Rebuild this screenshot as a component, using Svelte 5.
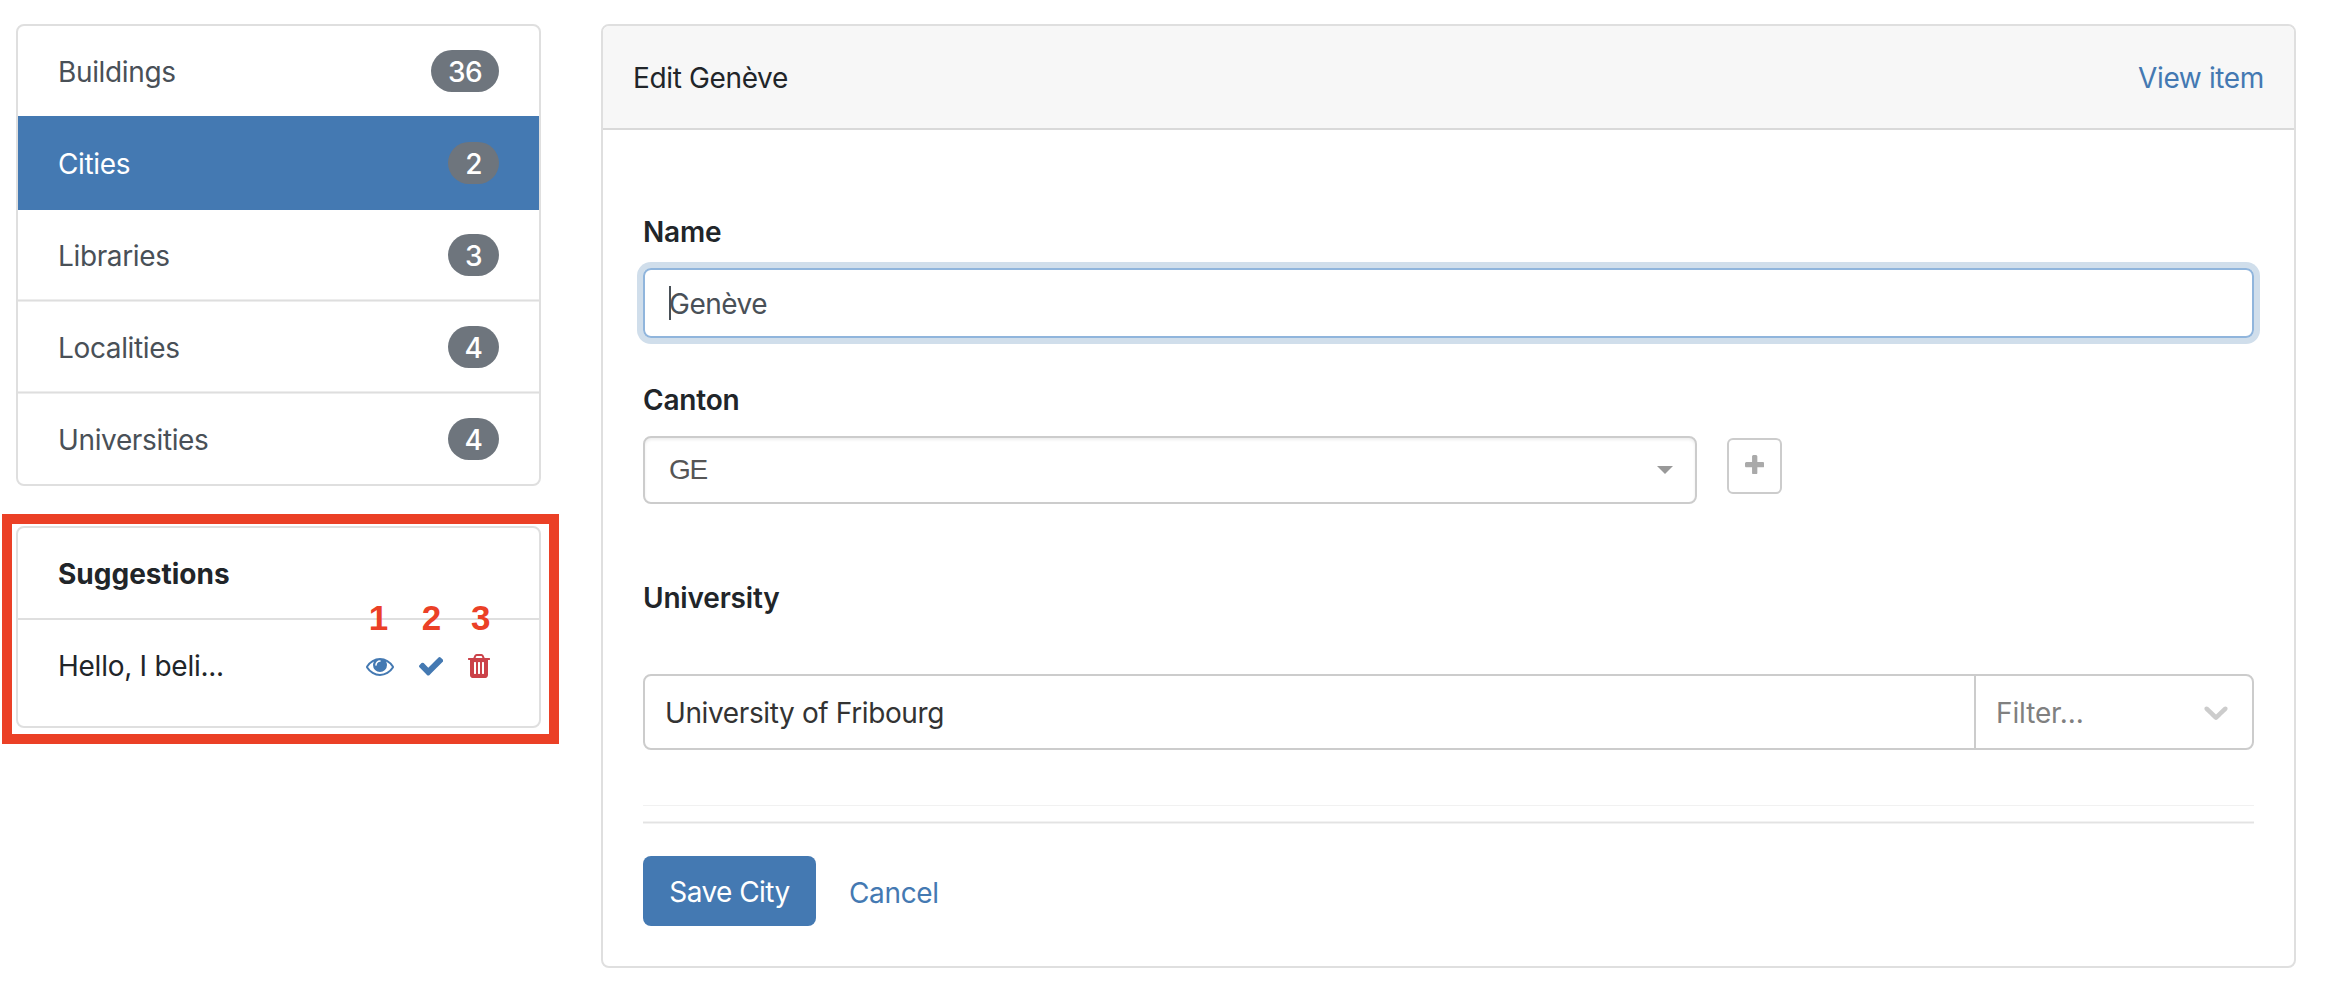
<script>
  const entities = [
    { name: 'Buildings', count: 36 },
    { name: 'Cities', count: 2, active: true },
    { name: 'Libraries', count: 3 },
    { name: 'Localities', count: 4 },
    { name: 'Universities', count: 4 }
  ];
</script>

<div class="page">
  <aside>
    <nav class="card list">
      {#each entities as e}
        <a class="item" class:active={e.active} href="#top">
          <span>{e.name}</span>
          <span class="badge" class:wide={e.count > 9}>{e.count}</span>
        </a>
      {/each}
    </nav>

    <section class="card suggestions">
      <h2>Suggestions</h2>
      <div class="suggestion">
        <span class="excerpt">Hello, I beli...</span>
        <div class="actions">
          <span class="action eye">
            <b class="num">1</b>
            <svg width="28" height="18" viewBox="0 384 1792 1152"><path d="M1664 960q-152-236-381-353 61 104 61 225 0 185-131.500 316.500t-316.500 131.500-316.500-131.500-131.500-316.500q0-121 61-225-229 117-381 353 133 205 333.500 326.500t434.500 121.500 434.500-121.500 333.500-326.500zm-720-384q0-20-14-34t-34-14q-125 0-214.500 89.500t-89.500 214.500q0 20 14 34t34 14 34-14 14-34q0-86 61-147t147-61q20 0 34-14t14-34zm848 384q0 34-20 69-140 230-376.500 368.500t-499.500 138.500-499.500-139-376.500-368q-20-35-20-69t20-69q140-229 376.500-368t499.500-139 499.500 139 376.500 368q20 35 20 69z" /></svg>
          </span>
          <span class="action check">
            <b class="num">2</b>
            <svg width="24.200" height="18.600" viewBox="121 334 1550 1188"><path d="M1671 566q0 40-28 68l-724 724-136 136q-28 28-68 28t-68-28l-136-136-362-362q-28-28-28-68t28-68l136-136q28-28 68-28t68 28l294 295 656-657q28-28 68-28t68 28l136 136q28 28 28 68z" /></svg>
          </span>
          <span class="action trash">
            <b class="num">3</b>
            <svg width="22" height="24" viewBox="192 128 1408 1536"><path d="M704 1376v-704q0-14-9-23t-23-9h-64q-14 0-23 9t-9 23v704q0 14 9 23t23 9h64q14 0 23-9t9-23zm256 0v-704q0-14-9-23t-23-9h-64q-14 0-23 9t-9 23v704q0 14 9 23t23 9h64q14 0 23-9t9-23zm256 0v-704q0-14-9-23t-23-9h-64q-14 0-23 9t-9 23v704q0 14 9 23t23 9h64q14 0 23-9t9-23zm-544-992h448l-48-117q-7-9-17-11h-317q-10 2-17 11zm928 32v64q0 14-9 23t-23 9h-96v948q0 83-47 143.500t-113 60.500h-832q-66 0-113-58.500t-47-141.500v-952h-96q-14 0-23-9t-9-23v-64q0-14 9-23t23-9h309l70-167q15-37 54-63t79-26h320q40 0 79 26t54 63l70 167h309q14 0 23 9t9 23z" /></svg>
          </span>
        </div>
      </div>
      <div class="highlight"></div>
    </section>
  </aside>

  <main class="card">
    <header>
      <span>Edit Genève</span>
      <a class="view" href="#top">View item</a>
    </header>
    <div class="body">
      <div class="label">Name</div>
      <div class="input"><i class="caret"></i>Genève</div>

      <div class="label canton">Canton</div>
      <div class="row">
        <div class="select">
          <span>GE</span>
          <svg width="16" height="8" viewBox="0 0 16 8"><path d="M0 0h16l-8 8z" /></svg>
        </div>
        <button class="add" aria-label="Add canton">
          <svg width="19.400" height="19.400" viewBox="192 128 1408 1408"><path d="M1600 736v192q0 40-28 68t-68 28h-416v416q0 40-28 68t-68 28h-192q-40 0-68-28t-28-68v-416h-416q-40 0-68-28t-28-68v-192q0-40 28-68t68-28h416v-416q0-40 28-68t68-28h192q40 0 68 28t28 68v416h416q40 0 68 28t28 68z" /></svg>
        </button>
      </div>

      <div class="label university">University</div>
      <div class="combo">
        <span class="value">University of Fribourg</span>
        <span class="filter">
          Filter...
          <svg width="40" height="40" viewBox="0 0 20 20"><path d="M4.516 7.548c0.436-0.446 1.043-0.481 1.576 0l3.908 3.747 3.908-3.747c0.533-0.481 1.141-0.446 1.574 0 0.436 0.445 0.408 1.197 0 1.615-0.406 0.418-4.695 4.502-4.695 4.502-0.217 0.223-0.502 0.335-0.787 0.335s-0.570-0.112-0.789-0.335c0 0-4.287-4.084-4.695-4.502s-0.436-1.170 0-1.615z" /></svg>
        </span>
      </div>

      <div class="rule thin"></div>
      <div class="rule"></div>

      <div class="buttons">
        <button class="save">Save City</button>
        <a class="cancel" href="#top">Cancel</a>
      </div>
    </div>
  </main>
</div>

<style>
  :global(body) { background: #fff; }
  .page, .page * { box-sizing: border-box; }
  .page {
    display: flex;
    align-items: flex-start;
    gap: 60px;
    height: 990px;
    padding: 24px 40px 0 16px;
    font: 400 28px/44px Inter, "Liberation Sans", sans-serif;
    letter-spacing: -0.36px;
    color: #212529;
  }
  a { text-decoration: none; color: #4479b2; }
  button { font: inherit; letter-spacing: inherit; padding: 0; }
  svg { display: block; fill: currentColor; flex: none; }
  .card { border: 2px solid #dfdfdf; border-radius: 8px; background: #fff; }

  aside { width: 525px; flex: none; }
  .list { height: 462px; overflow: hidden; }
  .item {
    display: flex;
    align-items: center;
    justify-content: space-between;
    height: 92px;
    padding: 0 40px;
    color: #495057;
  }
  .item:first-child { height: 90px; }
  .item.active { height: 94px; background: #4479b2; color: #fff; }
  .item:nth-child(3) { height: 90px; }
  .item:nth-child(n + 4) {
    padding-top: 2px;
    background: linear-gradient(#dedede 1px, #ededed 1px 2px, transparent 2px);
    box-shadow: 0 -1px #ededed;
  }
  .item span { height: 42px; line-height: 44px; }
  .badge {
    width: 51px;
    border-radius: 21px;
    background: #6e757d;
    color: #fff;
    font-weight: 500;
    letter-spacing: -0.6px;
    text-align: center;
  }
  .badge.wide { width: 68px; }

  .suggestions { position: relative; height: 202px; margin-top: 40px; }
  h2 {
    height: 92px;
    margin: 0;
    padding: 24px 40px 0;
    border-bottom: 2px solid #dfdfdf;
    font-size: 28px;
    line-height: 44px;
    font-weight: 700;
    letter-spacing: 0;
  }
  .suggestion { display: flex; justify-content: space-between; padding: 24px 49px 0 40px; }
  .excerpt { letter-spacing: -0.26px; }
  .actions { display: flex; align-items: flex-start; gap: 25px; color: #4479b2; }
  .action { position: relative; padding-top: 13px; }
  .action.eye { padding-top: 14px; }
  .action.trash { padding-top: 10px; color: #cb4249; }
  .num {
    position: absolute;
    top: -48px;
    left: 3px;
    font: bold 35px/44px "Liberation Sans", Arial, sans-serif;
    letter-spacing: 0;
    color: #eb4026;
  }
  .highlight {
    position: absolute;
    left: -16px;
    top: -14px;
    width: 557px;
    height: 230px;
    border: 10px solid #eb4026;
  }

  main { flex: 1; height: 944px; overflow: hidden; }
  header {
    display: flex;
    justify-content: space-between;
    height: 104px;
    padding: 0 30px;
    border-bottom: 2px solid #d9d9d9;
    background: #f7f7f7;
    line-height: 104px;
  }
  .body { padding: 81px 40px 0; }
  .label { height: 42px; line-height: 42px; font-weight: 600; letter-spacing: -0.18px; }
  .input {
    position: relative;
    height: 70px;
    margin-top: 15px;
    padding-left: 24px;
    border: 2px solid #90b5dc;
    border-radius: 8px;
    box-shadow: 0 0 0 6px #d0deeb;
    line-height: 68px;
    letter-spacing: -0.5px;
    color: #495057;
  }
  .caret { position: absolute; left: 24px; top: 16px; width: 2px; height: 34px; background: #495057; }
  .canton { margin-top: 41px; }
  .row { display: flex; align-items: flex-start; gap: 30px; margin-top: 15px; }
  .select {
    display: flex;
    align-items: center;
    justify-content: space-between;
    width: 1054px;
    height: 68px;
    padding: 0 22px 0 24px;
    border: 2px solid #ccc;
    border-radius: 8px;
    box-shadow: inset 0 2px 3px rgba(0, 0, 0, 0.07);
    font-family: "Liberation Sans", Arial, sans-serif;
    letter-spacing: -1.3px;
    color: #555;
  }
  .select svg { color: #999; }
  .add {
    display: flex;
    justify-content: center;
    width: 55px;
    height: 56px;
    margin-top: 2px;
    padding-top: 15px;
    border: 2px solid #ccc;
    border-radius: 6px;
    background: #fff;
    color: #aaa;
  }
  .university { margin-top: 73px; }
  .combo {
    display: flex;
    height: 76px;
    margin-top: 55px;
    border: 2px solid #ccc;
    border-radius: 8px;
    line-height: 74px;
    color: #333;
  }
  .value { flex: 1; height: 72px; padding-left: 20px; letter-spacing: -0.38px; }
  .filter {
    display: flex;
    justify-content: space-between;
    width: 278px;
    height: 72px;
    padding: 0 16px 0 20px;
    border-left: 2px solid #ccc;
    letter-spacing: -0.12px;
    color: #808080;
  }
  .filter svg { margin-top: 16px; color: #ccc; }
  .rule { height: 3px; margin-top: 15px; background: linear-gradient(#f2f2f2 1px, #e3e3e3 1px 2px, #f2f2f2 2px); }
  .rule.thin { height: 1px; margin-top: 55px; background: #f1f1f1; }
  .buttons { display: flex; gap: 33px; margin-top: 32px; }
  .save {
    width: 173px;
    height: 70px;
    padding-top: 1px;
    border: 0;
    border-radius: 8px;
    background: #4479b2;
    color: #fff;
    line-height: 70px;
    letter-spacing: -0.55px;
  }
  .cancel { line-height: 74px; height: 70px; }
</style>
